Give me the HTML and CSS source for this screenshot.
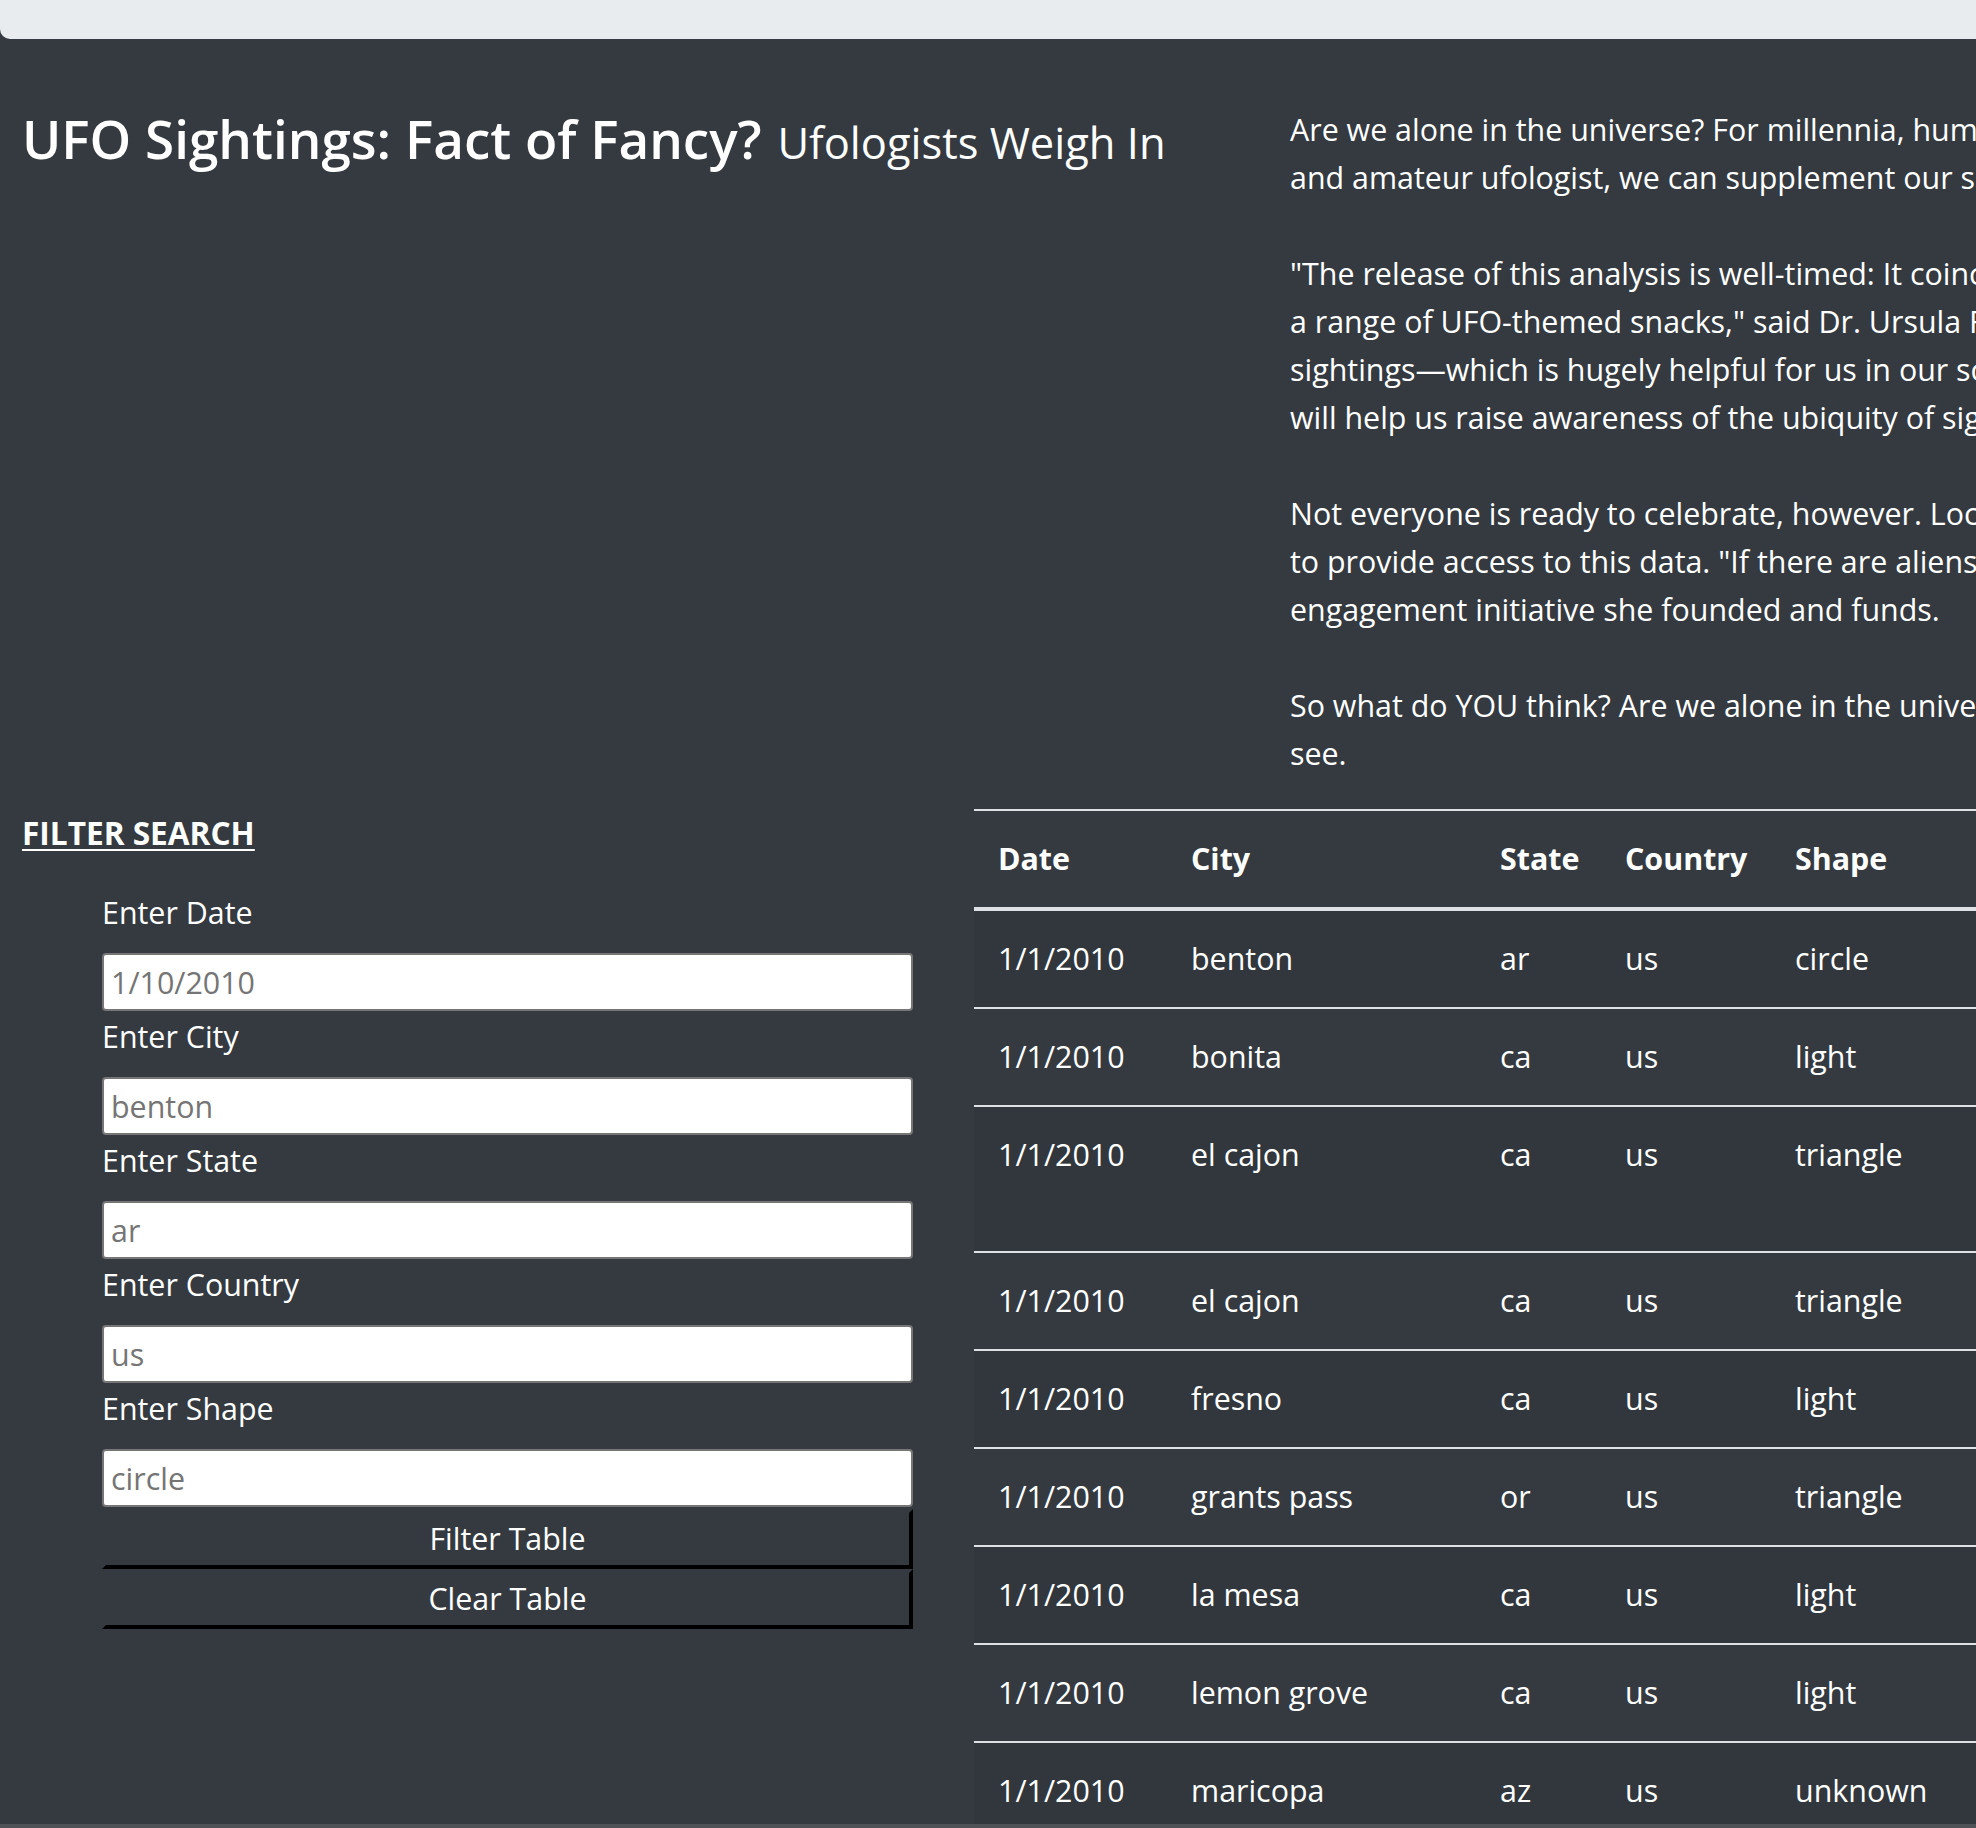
FILE: index.html
```html
<!DOCTYPE html>
<html lang="en">
<head>
<meta charset="utf-8">
<title>UFO Sightings</title>
<link rel="stylesheet" href="styles.css">
</head>
<body>
<div class="jumbotron-tail"></div>
<main class="page">
  <section class="intro">
    <div class="title-col">
      <h3 class="title">UFO Sightings: Fact of Fancy? <small>Ufologists Weigh In</small></h3>
    </div>
    <p class="story">Are we alone in the universe? For millennia, humans have looked up at the night sky and wondered. Now, with the help of a data analyst<br>and amateur ufologist, we can supplement our skywatching with hard data on UFO sightings from across the country.<br><br>"The release of this analysis is well-timed: It coincides with the launch of our new product line, which includes<br>a range of UFO-themed snacks," said Dr. Ursula Fleming, a local ufologist. "It gives us a comprehensive view of UFO<br>sightings—which is hugely helpful for us in our scientific research. And because the data is interactive, we hope it<br>will help us raise awareness of the ubiquity of sightings across the country."<br><br>Not everyone is ready to celebrate, however. Local activist Jane Doe criticized the decision by city officials<br>to provide access to this data. "If there are aliens, we should leave them alone," said Doe, head of a community<br>engagement initiative she founded and funds.<br><br>So what do YOU think? Are we alone in the universe? Explore the data below and decide for yourself. We would love to<br>see.</p>
  </section>

  <section class="data">
    <aside class="filters">
      <p class="filter-head"><u>FILTER SEARCH</u></p>
      <ul class="filter-list">
        <li class="filter-item">
          <label class="filter-label" for="datetime">Enter Date</label>
          <input class="filter-input" id="datetime" type="text" placeholder="1/10/2010">
        </li>
        <li class="filter-item">
          <label class="filter-label" for="city">Enter City</label>
          <input class="filter-input" id="city" type="text" placeholder="benton">
        </li>
        <li class="filter-item">
          <label class="filter-label" for="state">Enter State</label>
          <input class="filter-input" id="state" type="text" placeholder="ar">
        </li>
        <li class="filter-item">
          <label class="filter-label" for="country">Enter Country</label>
          <input class="filter-input" id="country" type="text" placeholder="us">
        </li>
        <li class="filter-item">
          <label class="filter-label" for="shape">Enter Shape</label>
          <input class="filter-input" id="shape" type="text" placeholder="circle">
        </li>
        <li class="button-item"><button class="table-btn" id="filter-btn" type="button">Filter Table</button></li>
        <li class="button-item"><button class="table-btn" id="clear-btn" type="button">Clear Table</button></li>
      </ul>
    </aside>

    <table class="sightings">
      <thead>
        <tr>
          <th class="col-date">Date</th>
          <th class="col-city">City</th>
          <th class="col-state">State</th>
          <th class="col-country">Country</th>
          <th class="col-shape">Shape</th>
          <th class="col-duration">Duration</th>
          <th class="col-comments">Comments</th>
        </tr>
      </thead>
      <tbody>
        <tr><td>1/1/2010</td><td>benton</td><td>ar</td><td>us</td><td>circle</td><td>5 mins.</td><td>4 bright green circles high in the sky</td></tr>
        <tr><td>1/1/2010</td><td>bonita</td><td>ca</td><td>us</td><td>light</td><td>13 minutes</td><td>Three bright red lights over San Diego</td></tr>
        <tr><td>1/1/2010</td><td>el cajon</td><td>ca</td><td>us</td><td>triangle</td><td>2 min.</td><td>My wife was driving southeast on a fairly populated main street and saw a strange craft with red lights</td></tr>
        <tr><td>1/1/2010</td><td>el cajon</td><td>ca</td><td>us</td><td>triangle</td><td>5 minutes</td><td>Three orange fireballs seen by a family</td></tr>
        <tr><td>1/1/2010</td><td>fresno</td><td>ca</td><td>us</td><td>light</td><td>10 min.</td><td>Bright white light moving across the sky</td></tr>
        <tr><td>1/1/2010</td><td>grants pass</td><td>or</td><td>us</td><td>triangle</td><td>30 minutes</td><td>Triangle shaped craft with white lights</td></tr>
        <tr><td>1/1/2010</td><td>la mesa</td><td>ca</td><td>us</td><td>light</td><td>3 min.</td><td>Flashing red and blue light in the sky</td></tr>
        <tr><td>1/1/2010</td><td>lemon grove</td><td>ca</td><td>us</td><td>light</td><td>1 hour</td><td>Bright orange light moving slowly west</td></tr>
        <tr><td>1/1/2010</td><td>maricopa</td><td>az</td><td>us</td><td>unknown</td><td>15 min.</td><td>Strange object hovering near mountains</td></tr>
        <tr><td>1/1/2010</td><td>mesa</td><td>az</td><td>us</td><td>light</td><td>5 min.</td><td>Red light over the desert</td></tr>
      </tbody>
    </table>
  </section>
</main>
<div class="scroll-edge"></div>
</body>
</html>
```

FILE: styles.css
```css
* {
  box-sizing: border-box;
}

html,
body {
  margin: 0;
  overflow: hidden;
}

body {
  background: #343a40;
  color: #fff;
  font-family: "Open Sans", "Noto Sans", sans-serif;
  font-size: 30.4px;
  line-height: 48px;
}

.jumbotron-tail {
  height: 39px;
  background: #e9ecef;
  border-bottom-left-radius: 10px;
}

.page {
  padding: 67px 0 0 22px;
}

/* ---------- intro ---------- */
.intro {
  display: flex;
  align-items: flex-start;
}

.title-col {
  flex: 0 0 1268px;
  padding-top: 1px;
}

.title {
  margin: 0;
  font-size: 53px;
  font-weight: 600;
  line-height: 1.2;
}

.title small {
  font-size: 82%;
  font-weight: 400;
  margin-left: 2px;
}

.story {
  flex: none;
  margin: 0 0 31px;
  white-space: nowrap;
}

/* ---------- filters + table ---------- */
.data {
  display: flex;
  align-items: flex-start;
}

.filters {
  flex: 0 0 952px;
}

.filter-head {
  margin: 0 0 32px;
  font-size: 31.6px;
  font-weight: 700;
}

.filter-head u {
  text-decoration-thickness: 2px;
  text-underline-offset: 4px;
}

.filter-list {
  list-style: none;
  margin: 0;
  padding: 0 0 0 80px;
  width: 891px;
}

.filter-item {
  margin-bottom: 2px;
}

.filter-label {
  display: block;
  margin-bottom: 16px;
}

.filter-input {
  display: block;
  width: 100%;
  height: 58px;
  margin: 0;
  padding: 0 7px;
  border: 2px solid #767676;
  border-radius: 4px;
  background: #fff;
  color: #495057;
  font: inherit;
  line-height: normal;
}

.filter-input::placeholder {
  color: #757575;
  opacity: 1;
}

.table-btn {
  display: block;
  width: 100%;
  height: 60px;
  margin: 0;
  padding: 0;
  background: transparent;
  color: #fff;
  font: inherit;
  line-height: 48px;
  border-style: solid;
  border-width: 4px;
  border-color: transparent #000 #000 transparent;
}

.sightings {
  flex: none;
  width: 2147px;
  table-layout: fixed;
  border-collapse: collapse;
  margin: 0;
}

.sightings th,
.sightings td {
  padding: 24px;
  border-top: 2px solid #dee2e6;
  text-align: left;
  vertical-align: top;
  line-height: 48px;
}

.sightings thead th {
  border-bottom: 4px solid #dee2e6;
  vertical-align: bottom;
  font-weight: 700;
}

.sightings tbody tr:nth-of-type(odd) {
  background: rgba(0, 0, 0, 0.05);
}

.col-date { width: 193px; }
.col-city { width: 309px; }
.col-state { width: 125px; }
.col-country { width: 170px; }
.col-shape { width: 230px; }
.col-duration { width: 220px; }
.col-comments { width: 900px; }

.scroll-edge {
  position: fixed;
  left: 0;
  right: 0;
  bottom: 0;
  height: 4px;
  background: #4f5358;
}
```
